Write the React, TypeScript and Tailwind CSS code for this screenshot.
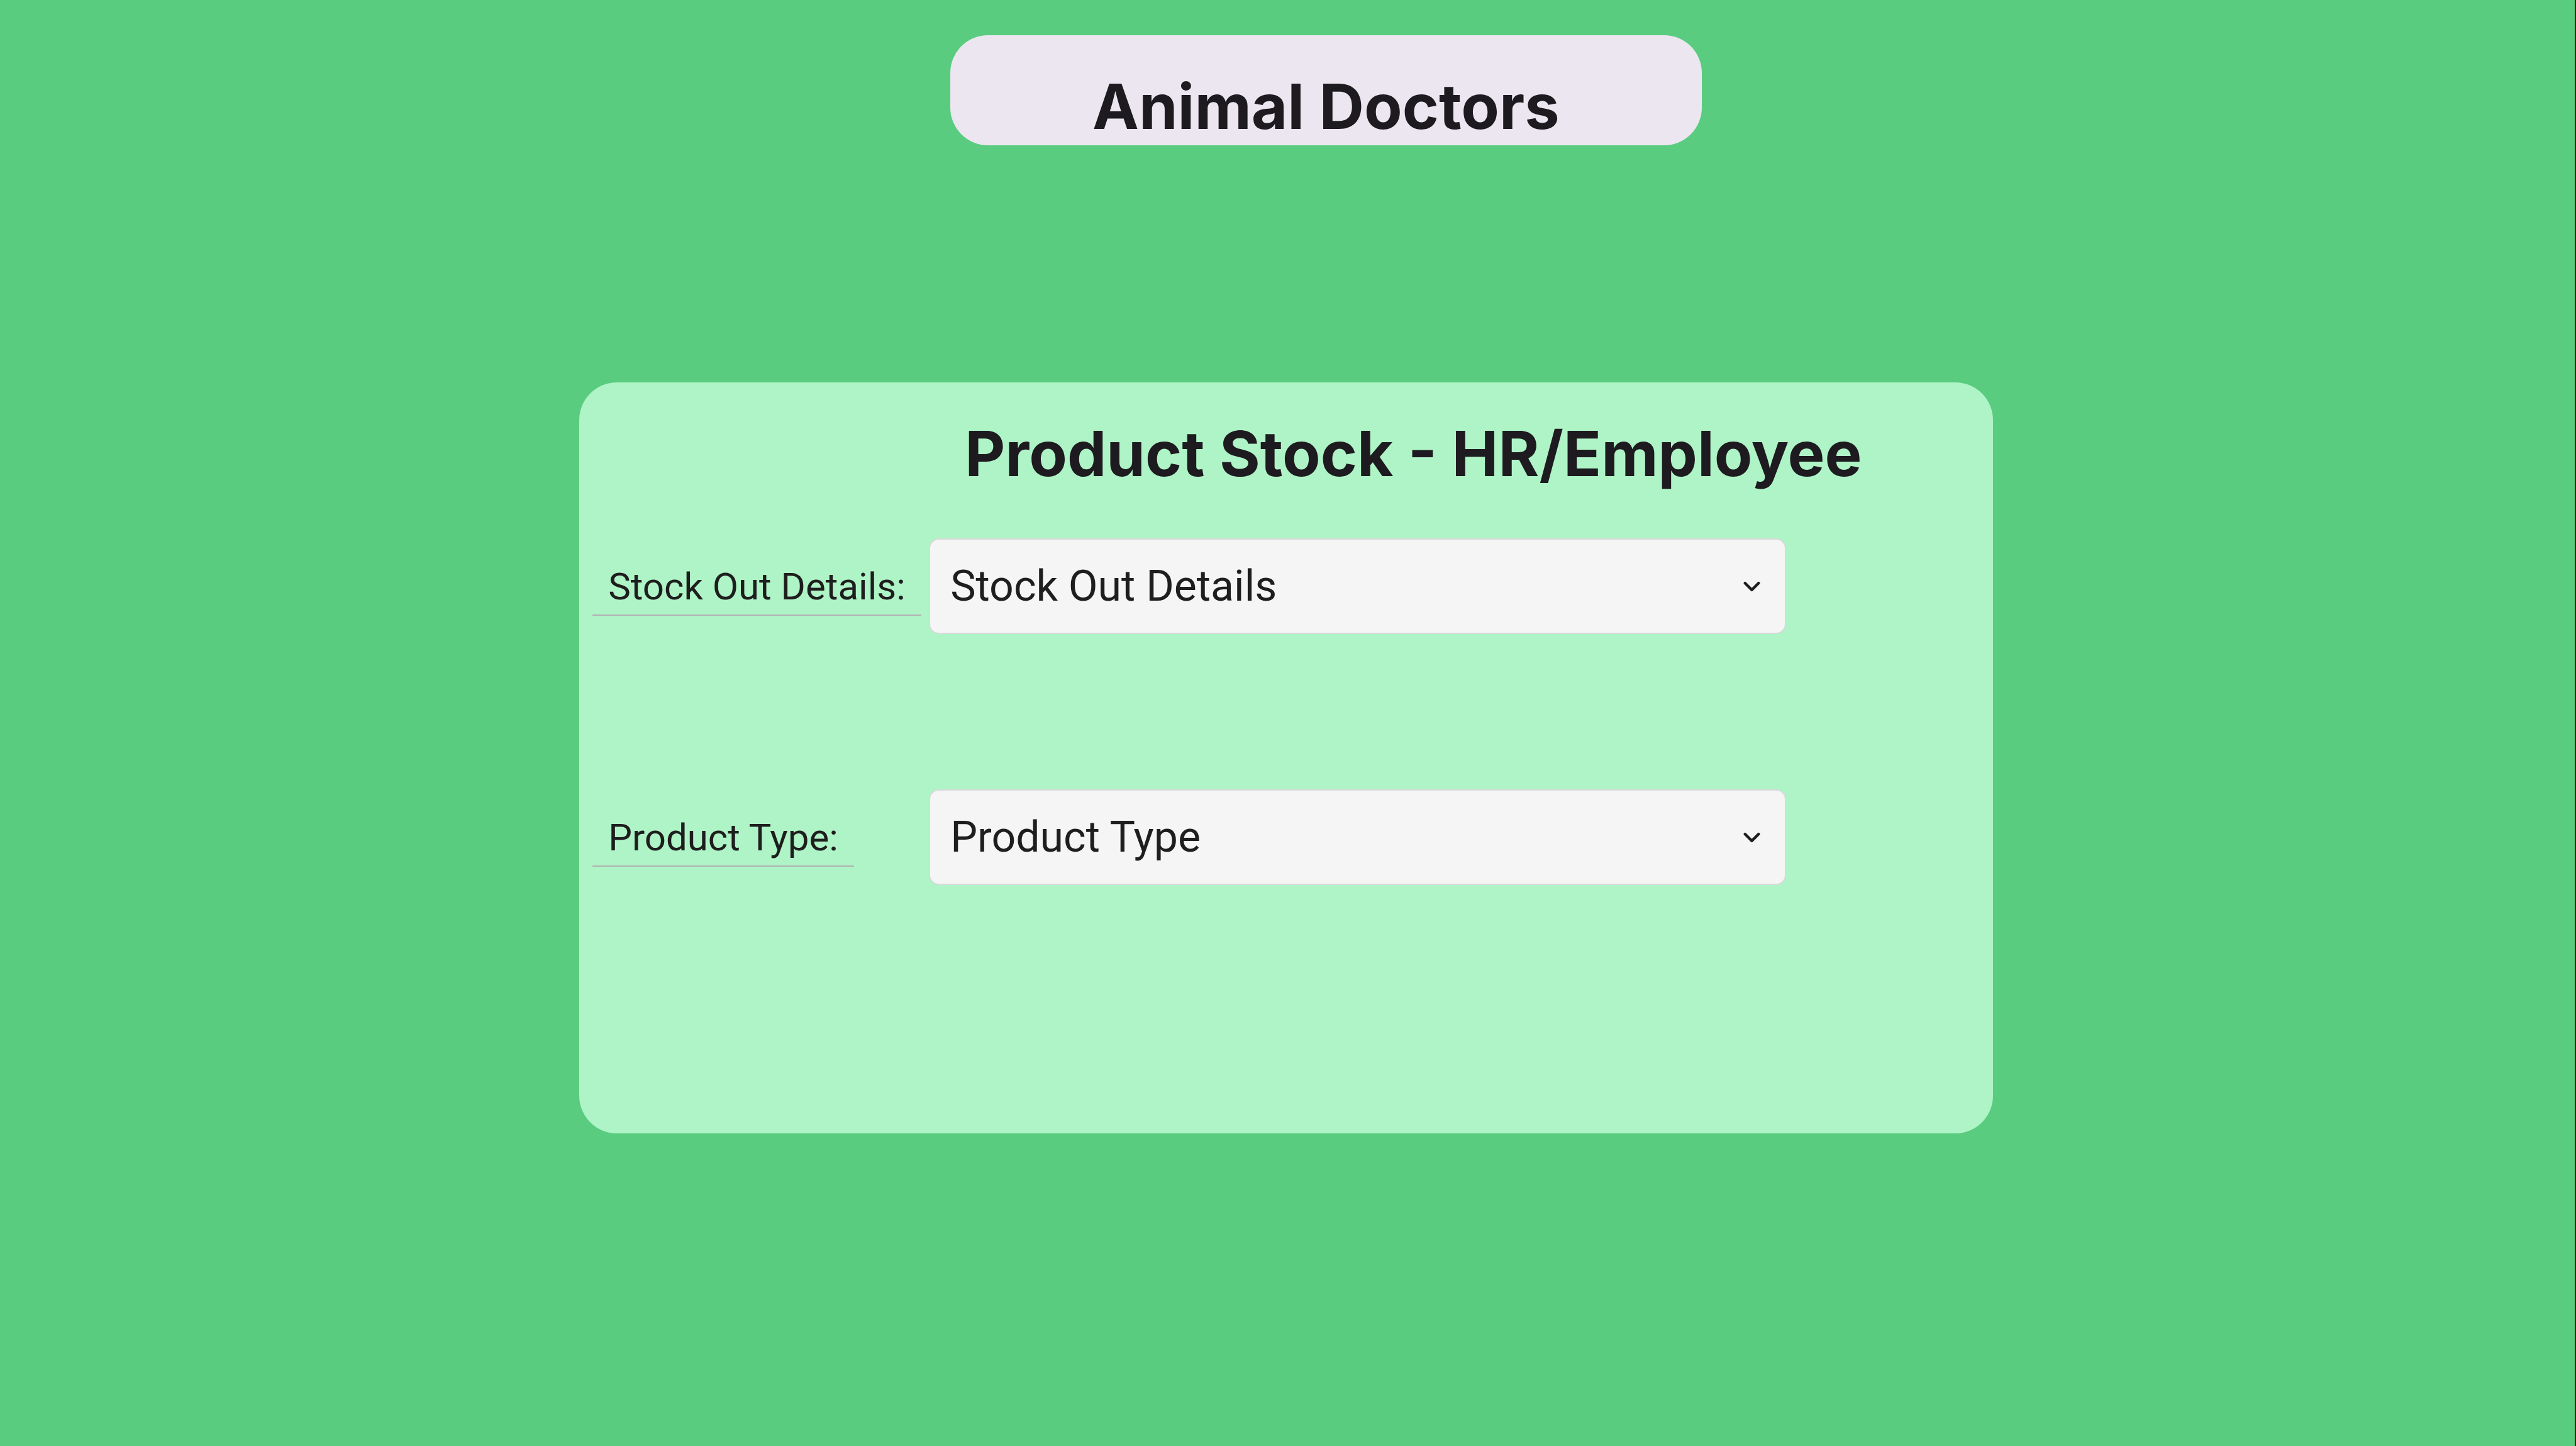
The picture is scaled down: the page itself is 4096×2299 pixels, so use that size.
type FieldProps = { id: string; label: string; value: string };

function SelectField({ id, label, value }: FieldProps) {
  return (
    <div className="flex items-start">
      <div className="w-[535px] shrink-0 pt-[35px]">
        <label
          htmlFor={id}
          className="inline-block border-b-2 border-[#b2b2b2] px-[25px] pb-[2px] text-[60px] leading-[84px] whitespace-nowrap"
        >
          {label}
        </label>
      </div>
      <div className="relative w-[61.2%]">
        <select
          id={id}
          defaultValue={value}
          className="block h-[152px] w-full appearance-none rounded-[16px] border-2 border-[#d9d9d9] bg-[#f5f5f5] px-[32px] text-[68px] text-[#1e1e1e]"
        >
          <option>{value}</option>
        </select>
        <svg
          aria-hidden="true"
          viewBox="0 0 16 16"
          className="pointer-events-none absolute inset-y-0 right-[33px] my-auto size-[43px]"
          fill="none"
          stroke="#1e1e1e"
          strokeWidth="1.6"
          strokeLinecap="round"
          strokeLinejoin="round"
        >
          <path d="M4 6l4 4 4-4" />
        </svg>
      </div>
    </div>
  );
}

export default function App() {
  return (
    <div className="min-h-screen border-r-2 border-[#1e1e1e] bg-[#5acc7f] pt-[56px] font-['Roboto',sans-serif] text-[#1e1e1e]">
      <header className="ml-[36.9%] w-[29.2%] rounded-[60px] bg-[#ece6f0] pt-[52px] pb-[1px] text-center">
        <h1 className="font-['Inter',sans-serif] text-[99px] leading-[122px] font-bold whitespace-nowrap text-[#1d1b20]">
          Animal Doctors
        </h1>
      </header>
      <main className="mt-[377px] ml-[22.5%] w-[54.9%] rounded-[60px] bg-[#aff4c6] pt-[52px] pb-[395px] pl-[21px]">
        <h2 className="pl-[592px] font-['Inter',sans-serif] text-[99px] leading-[122px] font-bold whitespace-nowrap text-[#1d1b20]">
          Product Stock - HR/Employee
        </h2>
        <form className="mt-[74px] flex flex-col gap-[247px]">
          <SelectField id="stock-out" label="Stock Out Details:" value="Stock Out Details" />
          <SelectField id="product-type" label="Product Type:" value="Product Type" />
        </form>
      </main>
    </div>
  );
}
